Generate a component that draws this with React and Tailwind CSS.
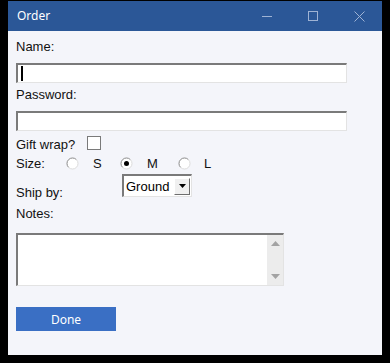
import React from 'react';

const Radio = ({ checked }) => (
  <svg width="13" height="13" viewBox="0 0 13 13" className="shrink-0">
    <circle cx="6.5" cy="6.5" r="5.5" fill="#fff" />
    <path d="M2.6 10.4 A5.5 5.5 0 0 1 10.4 2.6" fill="none" stroke="#8a8a8a" strokeWidth="1" />
    <path d="M10.4 2.6 A5.5 5.5 0 0 1 2.6 10.4" fill="none" stroke="#dcdcdc" strokeWidth="1" />
    {checked && <circle cx="6.5" cy="6.5" r="2.5" fill="#000" />}
  </svg>
);

const inset = 'border-t-2 border-l-2 border-b border-r border-t-[#7a7a7a] border-l-[#7a7a7a] border-b-[#e3e3e3] border-r-[#e3e3e3] bg-white';

export default function App() {
  return (
    <div className="w-[390px] h-[363px] bg-black pt-px pl-2" style={{ fontFamily: '"Liberation Sans", Arial, sans-serif' }}>
      <div className="w-[374px] h-[354px] bg-[#f4f5fa] flex flex-col">
        {/* title bar */}
        <div className="h-[30px] bg-[#2b5797] flex items-center shrink-0">
          <span className="pl-[9px] text-[12px] text-white" style={{ fontFamily: '"Noto Sans", "Open Sans", sans-serif' }}>Order</span>
          <div className="ml-auto flex h-full">
            <div className="w-[46px] h-full flex items-center justify-center">
              <div className="w-[10px] h-px bg-[#9fb3d4]" />
            </div>
            <div className="w-[46px] h-full flex items-center justify-center">
              <div className="w-[10px] h-[10px] border border-[#9fb3d4]" />
            </div>
            <div className="w-[46px] h-full flex items-center justify-center">
              <svg width="11" height="11" viewBox="0 0 11 11">
                <path d="M0.5 0.5 L10.5 10.5 M10.5 0.5 L0.5 10.5" stroke="#9fb3d4" strokeWidth="1" />
              </svg>
            </div>
          </div>
        </div>

        <div className="px-2 pt-2 text-[13px] leading-[15px] text-[#111]">
          <div>Name:</div>
          <div className={`mt-[9px] w-[331px] h-[20px] ${inset} flex items-center`}>
            <div className="ml-[3px] w-[2px] h-[15px] bg-black" />
          </div>

          <div className="mt-[4px]">Password:</div>
          <div className={`mt-[9px] w-[331px] h-[20px] ${inset}`} />

          <div className="mt-[6px] flex items-center h-[15px]">
            <span>Gift wrap?</span>
            <div className="ml-[12px] w-[14px] h-[14px] border border-[#7a7a7a] bg-white -mt-[3px]" />
          </div>

          <div className="mt-[4px] flex items-center h-[15px]">
            <span className="w-[50px]">Size:</span>
            <Radio />
            <span className="ml-[14px] w-[27px]">S</span>
            <Radio checked />
            <span className="ml-[14px] w-[31px]">M</span>
            <Radio />
            <span className="ml-[13px]">L</span>
          </div>

          <div className="mt-[3px] flex items-start">
            <span className="mt-[11px] w-[106px]">Ship by:</span>
            <div className={`w-[70px] h-[23px] ${inset} flex items-center`}>
              <span className="ml-[2px] text-black">Ground</span>
              <div className="ml-auto mr-px w-[16px] h-[17px] bg-[#f0f0f0] border border-t-white border-l-white border-b-[#6e6e6e] border-r-[#6e6e6e] flex items-center justify-center">
                <svg width="7" height="4" viewBox="0 0 7 4">
                  <path d="M0 0 L7 0 L3.5 4 Z" fill="#000" />
                </svg>
              </div>
            </div>
          </div>

          <div className="mt-[6px]">Notes:</div>
          <div className={`mt-[12px] w-[268px] h-[53px] ${inset} flex justify-end`}>
            <div className="w-[16px] h-full bg-[#ececec] flex flex-col items-center justify-between py-[6px]">
              <svg width="9" height="5" viewBox="0 0 9 5">
                <path d="M0 5 L4.5 0 L9 5 Z" fill="#a3a3a3" />
              </svg>
              <svg width="9" height="5" viewBox="0 0 9 5">
                <path d="M0 0 L9 0 L4.5 5 Z" fill="#a3a3a3" />
              </svg>
            </div>
          </div>

          <button className="mt-[21px] w-[100px] h-[24px] bg-[#3a6fc4] text-white text-[12px] flex items-center justify-center" style={{ fontFamily: '"Noto Sans", "Open Sans", sans-serif' }}>
            Done
          </button>
        </div>
      </div>
    </div>
  );
}
